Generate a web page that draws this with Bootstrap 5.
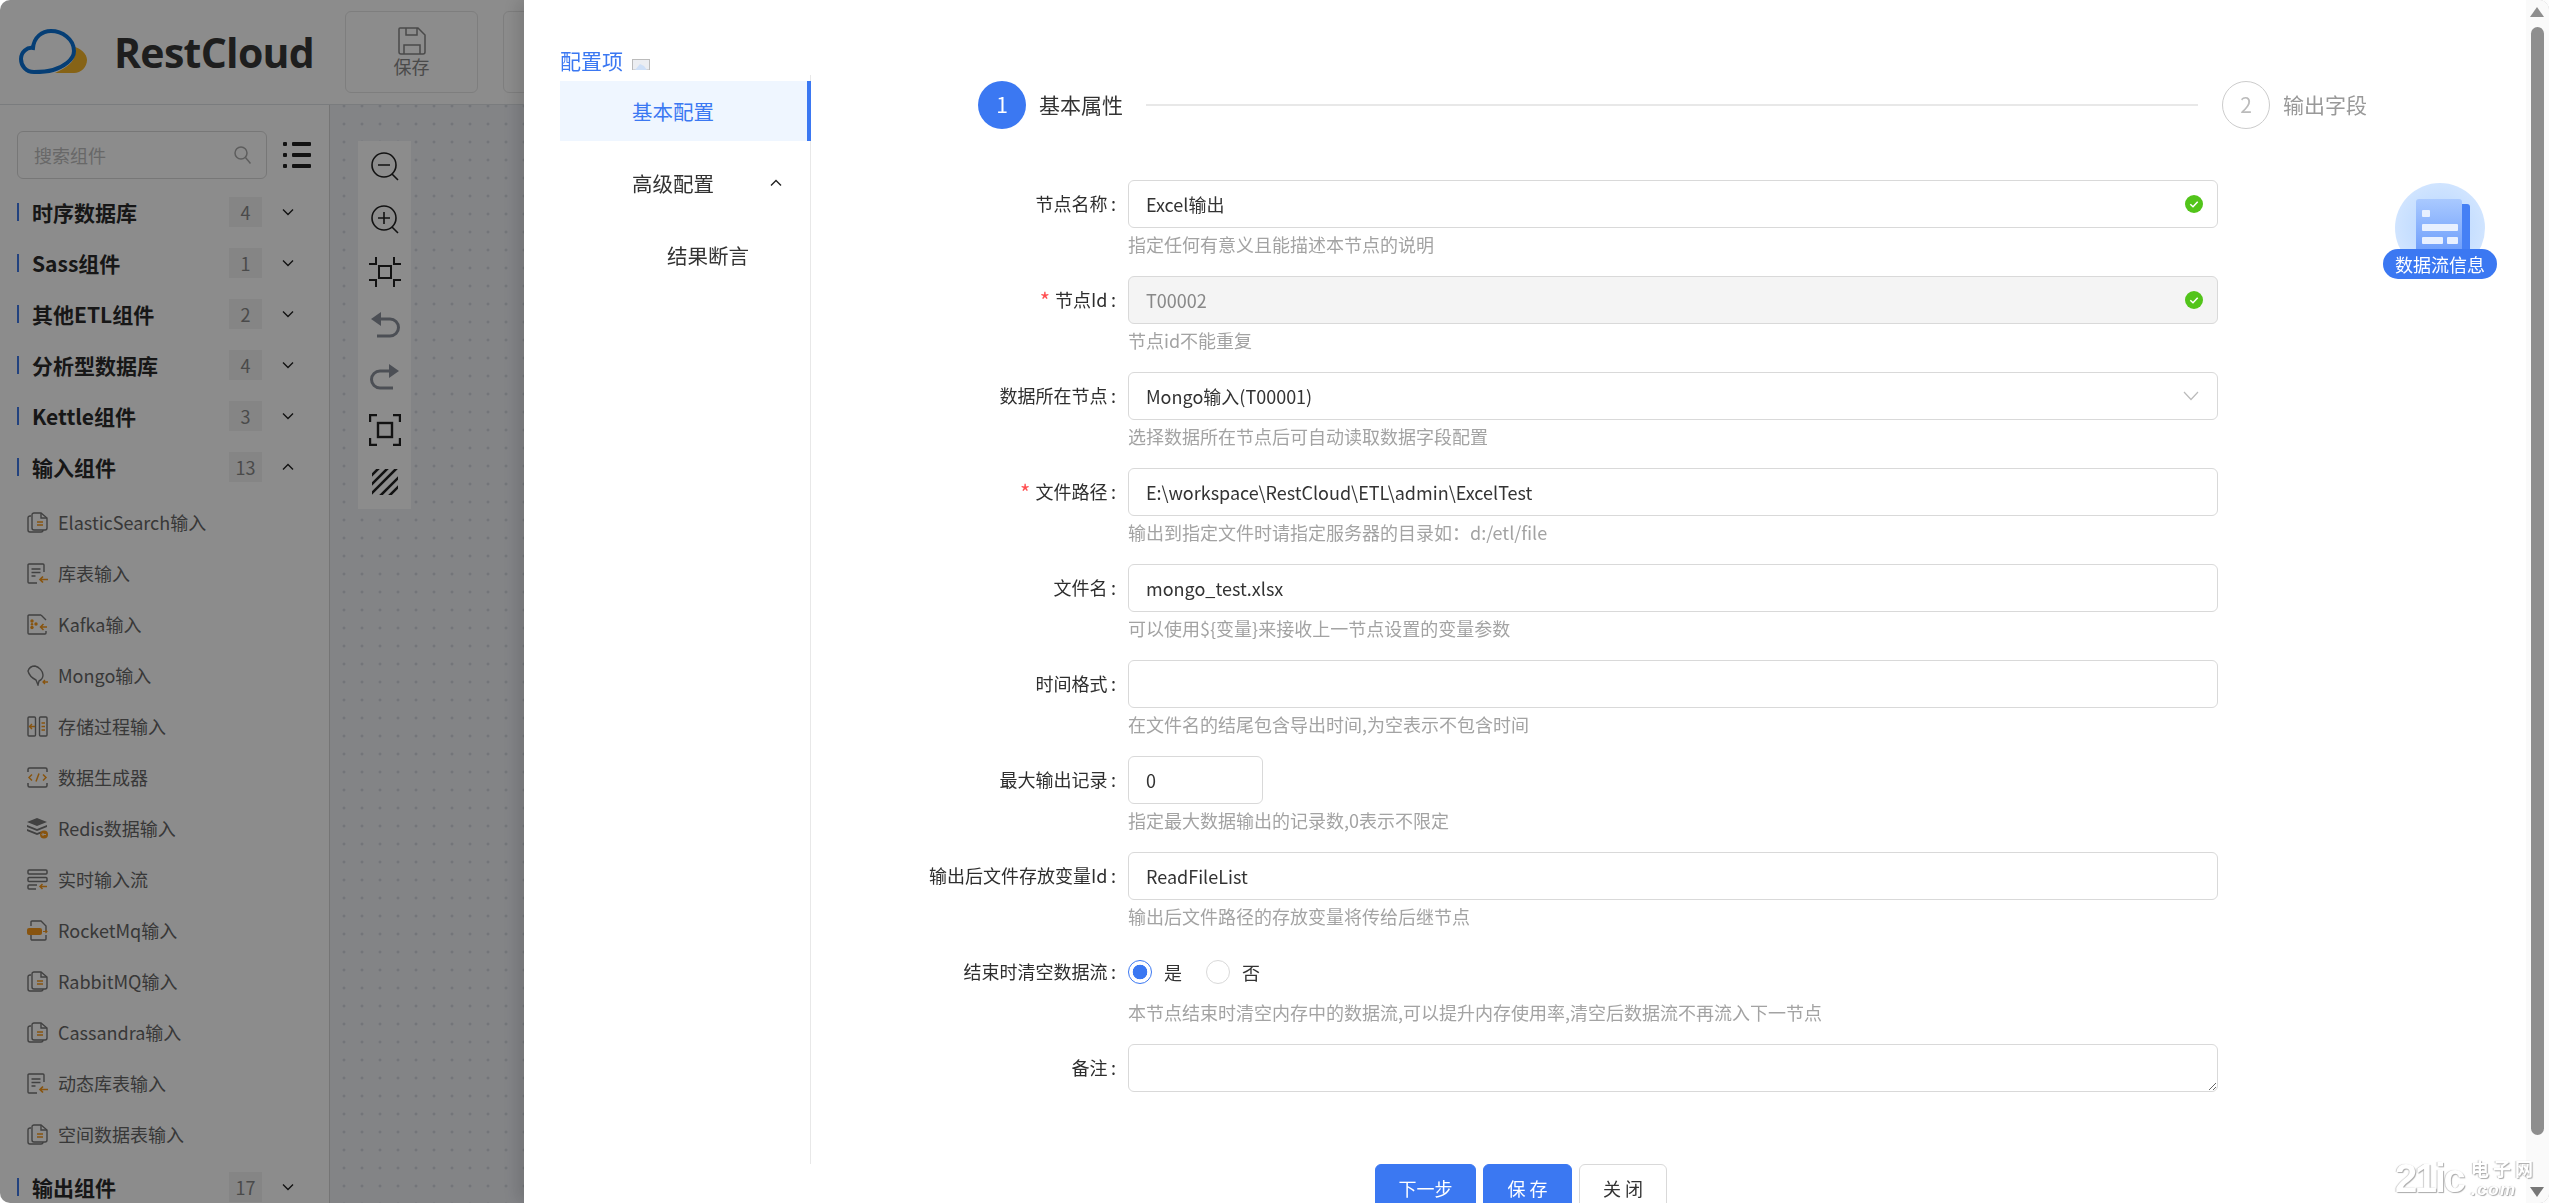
<!DOCTYPE html>
<html lang="zh-CN">
<head>
<meta charset="utf-8">
<title>RestCloud</title>
<link href="https://cdn.jsdelivr.net/npm/bootstrap@5.3.0/dist/css/bootstrap.min.css" rel="stylesheet">
<style>
html,body{height:100%;overflow:hidden;background:#fff;}
body{font-family:"Noto Sans CJK SC","Noto Sans",sans-serif;font-size:18px;color:#333;}
.app-shell{height:1203px;width:2549px;background:#fff;border-radius:10px;overflow:hidden;}
.app-top{height:105px;padding-left:19px;flex:none;background:#fff;}
.brand-word{font-family:"Open Sans","Noto Sans",sans-serif;font-weight:700;font-size:41px;letter-spacing:-.7px;color:#383838;margin-left:27px;width:231px;line-height:1;}
.top-tool{width:133px;height:82px;border:1px solid #e6e6e6;border-radius:6px;color:#888;font-size:18px;line-height:22px;flex:none;margin-right:25px;margin-top:-1px;}
.side-pane{width:330px;flex:none;border-right:1px solid #d6d6d6;background:#fff;padding-left:17px;}
.search-wrap{padding-top:26px;margin-bottom:7px;}
.search-line{height:48px;width:250px;border:1px solid #d9d9d9;border-radius:6px;padding:0 15px 0 16px;color:#bdbdbd;}
.group-row{height:51px;width:277px;}
.group-row b{font-size:21px;font-weight:700;color:#2a2a2a;line-height:30px;padding-left:15px;flex:1;position:relative;}
.group-row b::before{content:"";position:absolute;left:0;top:6px;bottom:6px;width:2px;background:#3f78e8;}
.group-num{width:33px;height:30px;background:#f3f3f3;color:#888;font-size:18px;line-height:30px;text-align:center;margin-right:20px;}
.leaf-first{margin-top:5px;}
.leaf-last{margin-bottom:1px;}
.leaf-row{height:51px;padding-left:10px;color:#666;gap:10px;white-space:nowrap;}
.canvas-pane{background-color:#eef0f5;background-image:radial-gradient(circle,#d2d6dc 1.3px,transparent 1.7px);background-size:18px 18px;background-position:5px -8px;padding-left:28px;padding-top:36px;flex:1;}
.tool-strip{width:53px;height:368px;background:#fff;}
.tool-strip svg{display:block;margin:0 auto;}
.tool-slot{height:52.5px;}
.dim-layer{left:0;top:0;width:2549px;height:1203px;background:rgba(0,0,0,.45);border-radius:10px;}
.side-drawer{left:524px;top:0;width:2025px;height:1203px;background:#fff;box-shadow:-8px 0 16px rgba(0,0,0,.12);border-radius:0 10px 10px 0;overflow:hidden;}
.nav-pane{width:287px;flex:none;padding-left:36px;}
.nav-head{height:75px;padding-top:45px;color:#3b78f2;font-size:21px;line-height:30px;gap:9px;}
.nav-menu{border-right:1px solid #e8e8e8;height:1089px;padding-top:6px;}
.nav-entry{height:60px;margin-bottom:12px;font-size:20.5px;color:#333;padding-left:72px;position:relative;}
.nav-entry.on{background:#eff6ff;color:#3b78f2;border-right:4px solid #3b78f2;margin-right:-1px;}
.nav-entry.sub{padding-left:107px;}
.nav-entry svg{position:absolute;left:210px;top:26px;}
.main-pane{flex:1;min-width:0;position:relative;}
.step-row{margin:81px 0 0 167px;height:48px;width:1389px;}
.step-dot{width:48px;height:48px;border-radius:50%;background:#3b78f2;color:#fff;font-size:21px;flex:none;}
.step-dot.idle{background:#fff;border:1px solid #ccc;color:#bbb;}
.step-name{font-size:21px;color:#333;margin:0 23px 0 13px;white-space:nowrap;}
.step-name.idle{color:#999;margin-right:0;}
.step-rule{flex:1;height:2px;background:#e8e8e8;margin-right:24px;}
.form-area{margin-top:51px;}
.field{display:flex;height:96px;}
.field-key{width:305px;flex:none;text-align:right;line-height:46px;color:#2e2e2e;white-space:nowrap;margin:0;}
.field-key i{color:#ff4d4f;font-style:normal;font-size:22px;line-height:1;margin-right:5px;vertical-align:-2px;}
.field-val{margin-left:12px;width:1090px;flex:none;}
.form-control.cell,.form-select.cell{height:48px;padding:0 17px;font-size:18px;color:#333;border:1px solid #d9d9d9;border-radius:6px;box-shadow:none;font-family:inherit;}
.form-select.cell{background-image:url("data:image/svg+xml,%3csvg xmlns='http://www.w3.org/2000/svg' viewBox='0 0 16 10'%3e%3cpath fill='none' stroke='%23bbb' stroke-width='1.2' d='M1 1l7 7.500 7-7.500'/%3e%3c/svg%3e");background-size:16px 10px;background-position:right 18px center;}
.form-control.cell.locked{background:#f4f4f4;color:#888;}
.cell.tiny{width:135px;}
.ok-mark{position:absolute;right:15px;top:15px;}
.hint-line{line-height:28px;margin-top:2px;color:#a3a3a3;font-size:18px;white-space:nowrap;}
.radio-line{height:48px;gap:0;}
.radio-line .form-check-input{width:24px;height:24px;margin:0 12px 0 0;border-color:#d9d9d9;flex:none;float:none;}
.radio-line .form-check-input:checked{background-color:#fff;border-color:#3b78f2;background-image:radial-gradient(circle,#3b78f2 0 7px,transparent 7.6px);}
.radio-line label{margin-right:22px;width:20px;}
.act-row{padding-left:564px;gap:7px;margin-top:24px;}
.act-btn{height:48px;font-size:18px;border-radius:6px;padding:0;}
.act-btn.fill{background:#3b78f2;border-color:#3b78f2;color:#fff;}
.act-btn.line{background:#fff;border:1px solid #d9d9d9;color:#333;}
.w-a{width:101px}.w-b{width:89px}.w-c{width:88px}
.scroll-rail{width:23px;flex:none;background:#fafafa;position:relative;}
.rail-thumb{position:absolute;left:5px;top:27px;width:13px;height:1108px;background:#8e8e8e;border-radius:7px;}
.rail-up,.rail-down{position:absolute;left:4px;width:0;height:0;border-left:7.5px solid transparent;border-right:7.5px solid transparent;}
.rail-up{top:7px;border-bottom:10px solid #8e8e8e;}
.rail-down{top:1187px;border-top:10px solid #777;}
.float-badge{position:absolute;left:1859px;top:183px;width:114px;height:96px;}
.float-disc{position:absolute;left:12px;top:0;width:90px;height:90px;border-radius:50%;background:radial-gradient(circle,#c0dbff 30%,#dcebff 100%);overflow:hidden;}
.float-pill{position:absolute;left:0;top:66px;width:114px;height:30px;border-radius:15px;background:#3b78f2;color:#fff;font-size:18px;line-height:30px;text-align:center;white-space:nowrap;}
.stamp{position:absolute;left:1871px;top:1158px;width:146px;height:40px;color:#fff;text-shadow:1px 1px 1px #aaa,-1px 0 1px #ccc;line-height:1;}
.stamp-num{position:absolute;left:0;top:0;font-family:"Liberation Sans",sans-serif;font-weight:700;font-size:40px;letter-spacing:-2.4px;}
.stamp-cn{position:absolute;left:76px;top:0;font-size:18px;line-height:20px;letter-spacing:4px;font-weight:700;white-space:nowrap;}
.stamp-com{position:absolute;left:76px;top:23px;font-family:"Liberation Sans",sans-serif;font-style:italic;font-weight:700;font-size:17px;letter-spacing:1.500px;}
</style>
</head>
<body>
<svg width="0" height="0" class="position-absolute">
<defs>
<symbol id="i-docs" viewBox="0 0 21 21"><g fill="none" stroke="#777" stroke-width="1.4"><path d="M4 4H3a2 2 0 0 0-2 2v12a2 2 0 0 0 2 2h11a2 2 0 0 0 2-2"/><path d="M5 3a2 2 0 0 1 2-2h7l6 5v10a2 2 0 0 1-2 2H7a2 2 0 0 1-2-2z"/><path d="M14 1v5h6"/></g><path d="M10 10h6M10 13h6" stroke="#f79a1c" stroke-width="1.5"/></symbol>
<symbol id="i-table" viewBox="0 0 21 21"><path d="M17 9V2a1 1 0 0 0-1-1H2a1 1 0 0 0-1 1v17a1 1 0 0 0 1 1h8M4.500 6h9M4.500 9.500h9M4.500 13h4" fill="none" stroke="#777" stroke-width="1.400"/><path d="M21 16.500h-8M16 13.500l-3 3 3 3" fill="none" stroke="#f79a1c" stroke-width="1.700"/></symbol>
<symbol id="i-kafka" viewBox="0 0 21 21"><path d="M14 1H2a1 1 0 0 0-1 1v17a1 1 0 0 0 1 1h16a1 1 0 0 0 1-1v-2M14 1l5 5" fill="none" stroke="#777" stroke-width="1.400"/><g fill="#f79a1c"><circle cx="5" cy="7" r="1.700"/><circle cx="5" cy="13.500" r="1.700"/><circle cx="9" cy="10" r="1.700"/><circle cx="5" cy="10.300" r="1.200"/></g><path d="M20 13h-6M16.500 10l-3 3 3 3" fill="none" stroke="#f79a1c" stroke-width="1.500"/></symbol>
<symbol id="i-leaf" viewBox="0 0 21 21"><path d="M1 6C2 3 5 1 8 1c4 1 8 5 8 9 0 3-2 5-4 6l-1 4-2-5C5 13 2 10 1 6z" fill="none" stroke="#777" stroke-width="1.400"/><path d="M21 17h-5M18 15l-2 2 2 2" fill="none" stroke="#f79a1c" stroke-width="1.300"/></symbol>
<symbol id="i-proc" viewBox="0 0 21 21"><g fill="none" stroke="#777" stroke-width="1.400"><rect x="1" y="1" width="7.500" height="19" rx="1"/><rect x="12.500" y="1" width="7.500" height="19" rx="1"/></g><path d="M8 10.500H3M5 8l-2.500 2.500L5 13M14.500 7h3.500M14.500 10.500h3.500M14.500 14h3.500" fill="none" stroke="#f79a1c" stroke-width="1.400"/></symbol>
<symbol id="i-code" viewBox="0 0 21 21"><path d="M1 5V2.500A1.500 1.500 0 0 1 2.500 1h16A1.500 1.500 0 0 1 20 2.500V5M1 16v2.500A1.500 1.500 0 0 0 2.500 20h16a1.500 1.500 0 0 0 1.500-1.500V16" fill="none" stroke="#777" stroke-width="1.500"/><path d="M5 7.500l-3 3 3 3M16 7.500l3 3-3 3M12 6.500l-3 8" fill="none" stroke="#f79a1c" stroke-width="1.500"/></symbol>
<symbol id="i-redis" viewBox="0 0 21 21"><path d="M10 0l10 4-10 4L0 4zM0 7l10 4 10-4v2l-10 4L0 9zM0 11l10 4 4-1.500v2L10 17 0 13z" fill="#777"/><circle cx="17" cy="16.500" r="4" fill="#f79a1c"/><path d="M19 16.500h-3.500M16.500 15l-1.500 1.500 1.500 1.500" stroke="#fff" fill="none" stroke-width=".9"/></symbol>
<symbol id="i-stream" viewBox="0 0 21 21"><g fill="none" stroke="#777" stroke-width="1.500"><rect x="1" y="1" width="19" height="4" rx="1"/><rect x="1" y="8.500" width="19" height="4" rx="1"/><path d="M10 16H2a1 1 0 0 0-1 1v2a1 1 0 0 0 1 1h7"/></g><path d="M20 17.500h-7M15.500 15l-2.500 2.500 2.500 2.500" fill="none" stroke="#f79a1c" stroke-width="1.500"/></symbol>
<symbol id="i-rocket" viewBox="0 0 21 21"><path d="M4 6V2a1 1 0 0 1 1-1h9l5 5v5M19 15v4a1 1 0 0 1-1 1H5a1 1 0 0 1-1-1v-4" fill="none" stroke="#777" stroke-width="1.400"/><rect x="0" y="8" width="15" height="7" rx="2" fill="#f79a1c"/><path d="M16 11.500h4M18.500 10l1.500 1.500-1.500 1.500" stroke="#f79a1c" fill="none" stroke-width="1.100"/></symbol>
<symbol id="i-down" viewBox="0 0 12 8"><path d="M1 1.500l5 5 5-5" fill="none" stroke="#222" stroke-width="1.400"/></symbol>
<symbol id="i-up" viewBox="0 0 12 8"><path d="M1 6.500l5-5 5 5" fill="none" stroke="#222" stroke-width="1.400"/></symbol>
<symbol id="i-ok" viewBox="0 0 18 18"><circle cx="9" cy="9" r="9" fill="#52c41a"/><path d="M5.300 9.300l2.700 2.500 4.700-5" fill="none" stroke="#fff" stroke-width="1.500"/></symbol>
</defs>
</svg>

<div class="app-shell d-flex flex-column">
  <header class="app-top d-flex align-items-center border-bottom">
    <svg width="68" height="46" viewBox="0 0 68 46"><path d="M53 17C62 19 68 25 68 31C68 38 62 44 55 44L36 44C47 39 56 33 56 24Z" fill="#f4b428"/><path d="M15 43C7 43 2 37 2 30C2 23 8 18 14 19C15 8 23 2 32 2C43 2 55 10 55 22C55 31 44 38 34 41C27 43 21 43 15 43Z" fill="#fff" stroke="#0a72d6" stroke-width="4"/></svg>
    <div class="brand-word">RestCloud</div>
    <div class="top-tool d-flex flex-column align-items-center justify-content-center">
      <svg width="28" height="28" viewBox="0 0 28 28"><path d="M2 1h18l7 7v17a2 2 0 0 1-2 2H3a2 2 0 0 1-2-2V2a1 1 0 0 1 1-1zM8 1v7h11V1M6 27v-9h16v9" fill="none" stroke="#888" stroke-width="1.500"/></svg>
      <span>保存</span>
    </div>
    <div class="top-tool"></div>
  </header>
  <div class="d-flex flex-grow-1">
    <aside class="side-pane">
      <div class="search-wrap d-flex align-items-center">
        <div class="search-line d-flex align-items-center justify-content-between">
          <span>搜索组件</span>
          <svg width="17" height="18" viewBox="0 0 17 18"><circle cx="7" cy="7" r="6" fill="none" stroke="#aaa" stroke-width="1.500"/><path d="M11.500 11.500l5 6" stroke="#aaa" stroke-width="1.500"/></svg>
        </div>
        <svg class="ms-3" width="28" height="26" viewBox="0 0 28 26"><g fill="#222"><rect x="0" y="0" width="4" height="4" rx="1"/><rect x="0" y="11" width="4" height="4" rx="1"/><rect x="0" y="22" width="4" height="4" rx="1"/><rect x="9" y="0" width="19" height="4" rx="1"/><rect x="9" y="11" width="19" height="4" rx="1"/><rect x="9" y="22" width="19" height="4" rx="1"/></g></svg>
      </div>
      <div class="group-row d-flex align-items-center"><b>时序数据库</b><span class="group-num">4</span><svg width="12" height="8"><use href="#i-down"/></svg></div>
      <div class="group-row d-flex align-items-center"><b>Sass组件</b><span class="group-num">1</span><svg width="12" height="8"><use href="#i-down"/></svg></div>
      <div class="group-row d-flex align-items-center"><b>其他ETL组件</b><span class="group-num">2</span><svg width="12" height="8"><use href="#i-down"/></svg></div>
      <div class="group-row d-flex align-items-center"><b>分析型数据库</b><span class="group-num">4</span><svg width="12" height="8"><use href="#i-down"/></svg></div>
      <div class="group-row d-flex align-items-center"><b>Kettle组件</b><span class="group-num">3</span><svg width="12" height="8"><use href="#i-down"/></svg></div>
      <div class="group-row d-flex align-items-center"><b>输入组件</b><span class="group-num">13</span><svg width="12" height="8"><use href="#i-up"/></svg></div>
      <div class="leaf-row leaf-first d-flex align-items-center"><svg width="21" height="21"><use href="#i-docs"/></svg>ElasticSearch输入</div>
      <div class="leaf-row d-flex align-items-center"><svg width="21" height="21"><use href="#i-table"/></svg>库表输入</div>
      <div class="leaf-row d-flex align-items-center"><svg width="21" height="21"><use href="#i-kafka"/></svg>Kafka输入</div>
      <div class="leaf-row d-flex align-items-center"><svg width="21" height="21"><use href="#i-leaf"/></svg>Mongo输入</div>
      <div class="leaf-row d-flex align-items-center"><svg width="21" height="21"><use href="#i-proc"/></svg>存储过程输入</div>
      <div class="leaf-row d-flex align-items-center"><svg width="21" height="21"><use href="#i-code"/></svg>数据生成器</div>
      <div class="leaf-row d-flex align-items-center"><svg width="21" height="21"><use href="#i-redis"/></svg>Redis数据输入</div>
      <div class="leaf-row d-flex align-items-center"><svg width="21" height="21"><use href="#i-stream"/></svg>实时输入流</div>
      <div class="leaf-row d-flex align-items-center"><svg width="21" height="21"><use href="#i-rocket"/></svg>RocketMq输入</div>
      <div class="leaf-row d-flex align-items-center"><svg width="21" height="21"><use href="#i-docs"/></svg>RabbitMQ输入</div>
      <div class="leaf-row d-flex align-items-center"><svg width="21" height="21"><use href="#i-docs"/></svg>Cassandra输入</div>
      <div class="leaf-row d-flex align-items-center"><svg width="21" height="21"><use href="#i-table"/></svg>动态库表输入</div>
      <div class="leaf-row leaf-last d-flex align-items-center"><svg width="21" height="21"><use href="#i-docs"/></svg>空间数据表输入</div>
      <div class="group-row d-flex align-items-center"><b>输出组件</b><span class="group-num">17</span><svg width="12" height="8"><use href="#i-down"/></svg></div>
    </aside>
    <main class="canvas-pane">
      <div class="tool-strip">
        <div class="tool-slot d-flex align-items-center justify-content-center"><svg width="30" height="30" viewBox="0 0 30 30" fill="none" stroke="#222" stroke-width="1.600"><circle cx="14" cy="13" r="12"/><path d="M8 13h12M22 22l6 6"/></svg></div>
        <div class="tool-slot d-flex align-items-center justify-content-center"><svg width="30" height="30" viewBox="0 0 30 30" fill="none" stroke="#222" stroke-width="1.600"><circle cx="14" cy="13" r="12"/><path d="M8 13h12M14 7v12M22 22l6 6"/></svg></div>
        <div class="tool-slot d-flex align-items-center justify-content-center"><svg width="32" height="32" viewBox="0 0 32 32" fill="none" stroke="#222" stroke-width="2"><rect x="10" y="10" width="12" height="12"/><path d="M0 8h7V1M25 1v7h7M0 24h7v7M25 31v-7h7"/></svg></div>
        <div class="tool-slot d-flex align-items-center justify-content-center"><svg width="30" height="30" viewBox="0 0 30 30" fill="none" stroke="#8b919c" stroke-width="3"><path d="M8 9h12a8 8 0 0 1 0 17H7"/><path d="M11 2L1 9l10 7z" fill="#8b919c" stroke="none"/></svg></div>
        <div class="tool-slot d-flex align-items-center justify-content-center"><svg width="30" height="30" viewBox="0 0 30 30" fill="none" stroke="#8b919c" stroke-width="3"><path d="M22 9H10a8 8 0 0 0 0 17h13"/><path d="M19 2l10 7-10 7z" fill="#8b919c" stroke="none"/></svg></div>
        <div class="tool-slot d-flex align-items-center justify-content-center"><svg width="32" height="32" viewBox="0 0 32 32" fill="none" stroke="#222" stroke-width="2.400"><rect x="9" y="9" width="14" height="14"/><path d="M8 1H1v7M24 1h7v7M8 31H1v-7M24 31h7v-7"/></svg></div>
        <div class="tool-slot d-flex align-items-center justify-content-center"><svg width="26" height="26" viewBox="0 0 26 26" stroke="#222" stroke-width="2.600"><clipPath id="hatch-box"><rect width="26" height="26"/></clipPath><g clip-path="url(#hatch-box)"><path d="M-2 8L8-2M-2 17L17-2M-2 26L26-2M7 28L28 7M16 28L28 16"/></g></svg></div>
      </div>
    </main>
  </div>
</div>

<div class="dim-layer position-fixed"></div>

<div class="side-drawer position-fixed d-flex">
  <nav class="nav-pane">
    <div class="nav-head d-flex"><span>配置项</span><svg width="18" height="11" viewBox="0 0 18 11" style="margin-top:14px"><rect x=".5" y=".5" width="17" height="10.500" fill="#eceef2" stroke="#bbb"/><path d="M3 11l5-6 4 2 3 4z" fill="#cfe0f7"/></svg></div>
    <div class="nav-menu">
      <div class="nav-entry on d-flex align-items-center">基本配置</div>
      <div class="nav-entry d-flex align-items-center">高级配置<svg width="12" height="8"><use href="#i-up"/></svg></div>
      <div class="nav-entry sub d-flex align-items-center">结果断言</div>
    </div>
  </nav>
  <div class="main-pane">
    <div class="step-row d-flex align-items-center">
      <span class="step-dot d-flex align-items-center justify-content-center">1</span>
      <span class="step-name">基本属性</span>
      <span class="step-rule"></span>
      <span class="step-dot idle d-flex align-items-center justify-content-center">2</span>
      <span class="step-name idle">输出字段</span>
    </div>
    <form class="form-area">
      <div class="field"><label class="field-key">节点名称&#8201;:</label><div class="field-val"><div class="position-relative"><input class="form-control cell" value="Excel输出"><svg class="ok-mark" width="18" height="18"><use href="#i-ok"/></svg></div><div class="hint-line">指定任何有意义且能描述本节点的说明</div></div></div>
      <div class="field"><label class="field-key"><i>*</i>节点Id&#8201;:</label><div class="field-val"><div class="position-relative"><input class="form-control cell locked" value="T00002" readonly><svg class="ok-mark" width="18" height="18"><use href="#i-ok"/></svg></div><div class="hint-line">节点id不能重复</div></div></div>
      <div class="field"><label class="field-key">数据所在节点&#8201;:</label><div class="field-val"><select class="form-select cell"><option>Mongo输入(T00001)</option></select><div class="hint-line">选择数据所在节点后可自动读取数据字段配置</div></div></div>
      <div class="field"><label class="field-key"><i>*</i>文件路径&#8201;:</label><div class="field-val"><input class="form-control cell" value="E:\workspace\RestCloud\ETL\admin\ExcelTest"><div class="hint-line">输出到指定文件时请指定服务器的目录如：d:/etl/file</div></div></div>
      <div class="field"><label class="field-key">文件名&#8201;:</label><div class="field-val"><input class="form-control cell" value="mongo_test.xlsx"><div class="hint-line">可以使用${变量}来接收上一节点设置的变量参数</div></div></div>
      <div class="field"><label class="field-key">时间格式&#8201;:</label><div class="field-val"><input class="form-control cell"><div class="hint-line">在文件名的结尾包含导出时间,为空表示不包含时间</div></div></div>
      <div class="field"><label class="field-key">最大输出记录&#8201;:</label><div class="field-val"><input class="form-control cell tiny" value="0"><div class="hint-line">指定最大数据输出的记录数,0表示不限定</div></div></div>
      <div class="field"><label class="field-key">输出后文件存放变量Id&#8201;:</label><div class="field-val"><input class="form-control cell" value="ReadFileList"><div class="hint-line">输出后文件路径的存放变量将传给后继节点</div></div></div>
      <div class="field"><label class="field-key">结束时清空数据流&#8201;:</label><div class="field-val"><div class="radio-line d-flex align-items-center"><input class="form-check-input" type="radio" name="clear" checked><label>是</label><input class="form-check-input" type="radio" name="clear"><label>否</label></div><div class="hint-line">本节点结束时清空内存中的数据流,可以提升内存使用率,清空后数据流不再流入下一节点</div></div></div>
      <div class="field"><label class="field-key">备注&#8201;:</label><div class="field-val"><textarea class="form-control cell"></textarea></div></div>
    </form>
    <div class="act-row d-flex">
      <button type="button" class="btn act-btn fill w-a">下一步</button>
      <button type="button" class="btn act-btn fill w-b">保 存</button>
      <button type="button" class="btn act-btn line w-c">关 闭</button>
    </div>
  </div>
  <div class="float-badge">
    <div class="float-disc">
      <svg width="90" height="90" viewBox="0 0 90 90"><defs><linearGradient id="book-g" x1="0" y1="0" x2="0" y2="1"><stop offset="0" stop-color="#a9c9ff"/><stop offset="1" stop-color="#5f93fa"/></linearGradient></defs><rect x="61" y="21" width="14" height="60" rx="3" fill="#4580f5"/><rect x="21" y="16" width="46" height="66" rx="3" fill="url(#book-g)"/><g fill="#e8f0ff"><rect x="27" y="27" width="8" height="7" rx="1"/><rect x="27" y="41" width="36" height="7" rx="1"/><rect x="27" y="54" width="21" height="7" rx="1"/><rect x="52" y="54" width="11" height="7" rx="1"/></g></svg>
    </div>
    <div class="float-pill">数据流信息</div>
  </div>
  <div class="scroll-rail">
    <span class="rail-up"></span><span class="rail-thumb"></span><span class="rail-down"></span>
  </div>
  <div class="stamp"><span class="stamp-num">21ic</span><span class="stamp-cn">电子网</span><span class="stamp-com">.com</span></div>
</div>
<script src="https://cdn.jsdelivr.net/npm/bootstrap@5.3.0/dist/js/bootstrap.bundle.min.js"></script>
</body>
</html>
